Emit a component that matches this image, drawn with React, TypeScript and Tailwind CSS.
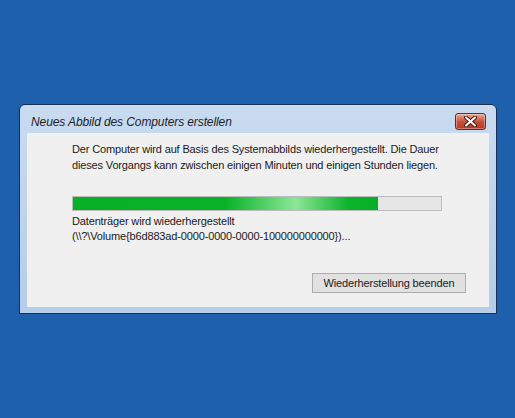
const ui = { fontFamily: '"Liberation Sans", Arial, sans-serif' };

function CloseButton() {
  return (
    <button className="flex h-[17px] w-[31px] items-center justify-center rounded-[3px] border border-[#6b2a1e] bg-gradient-to-b from-[#e9a99a] via-[#c9513a] to-[#b8371f] shadow-[inset_0_0_0_1px_rgba(255,255,255,0.35)]">
      <svg width="13" height="11" viewBox="0 0 13 11">
        <path d="M2 1.5 L11 9.5 M11 1.5 L2 9.5" stroke="#4a1a12" strokeWidth="4" strokeLinecap="round" />
        <path d="M2 1.5 L11 9.5 M11 1.5 L2 9.5" stroke="#ffffff" strokeWidth="2" strokeLinecap="round" />
      </svg>
    </button>
  );
}

function ProgressBar({ value }: { value: number }) {
  return (
    <div className="h-[15px] w-[370px] border border-[#bcbcbc] bg-[#e6e6e6]">
      <div
        className="h-full bg-[linear-gradient(90deg,#06b025_0%,#08b328_50%,#8ee698_73%,#0cb42c_90%,#06b025_100%)]"
        style={{ width: `${value}%` }}
      />
    </div>
  );
}

export default function App() {
  return (
    <div className="h-[418px] w-[515px] bg-[#1f60ad] pl-[19px] pt-[104px]" style={ui}>
      <div className="flex h-[210px] w-[478px] flex-col rounded-t-[6px] border border-[#1b2f4d] bg-gradient-to-b from-[#c9dbf0] to-[#b5cde9]">
        <div className="flex h-[28px] shrink-0 items-center justify-between pl-[11px] pr-[10px] pt-[5px]">
          <span className="whitespace-nowrap text-[12px] italic tracking-[-0.1px] text-[#1e1e1e]">Neues Abbild des Computers erstellen</span>
          <CloseButton />
        </div>
        <div className="mx-[7px] mb-[6px] flex flex-1 flex-col whitespace-nowrap bg-[#f0f0f0] pl-[45px] pr-[23px] text-[11px] leading-[16px] tracking-[-0.15px] text-[#1a1a1a]">
          <p className="pt-[8px]">
            Der Computer wird auf Basis des Systemabbilds wiederhergestellt. Die Dauer
            <br />
            dieses Vorgangs kann zwischen einigen Minuten und einigen Stunden liegen.
          </p>
          <div className="pt-[23px]">
            <ProgressBar value={83} />
          </div>
          <p className="pt-[3px] leading-[15px]">
            Datenträger wird wiederhergestellt
            <br />
            (\\?\Volume{'{'}b6d883ad-0000-0000-0000-100000000000{'}'})...
          </p>
          <div className="flex justify-end pt-[29px]">
            <button className="h-[20px] w-[154px] border border-[#adadad] bg-[#e1e1e1] text-[11px] text-[#1a1a1a]">
              Wiederherstellung beenden
            </button>
          </div>
        </div>
      </div>
    </div>
  );
}
